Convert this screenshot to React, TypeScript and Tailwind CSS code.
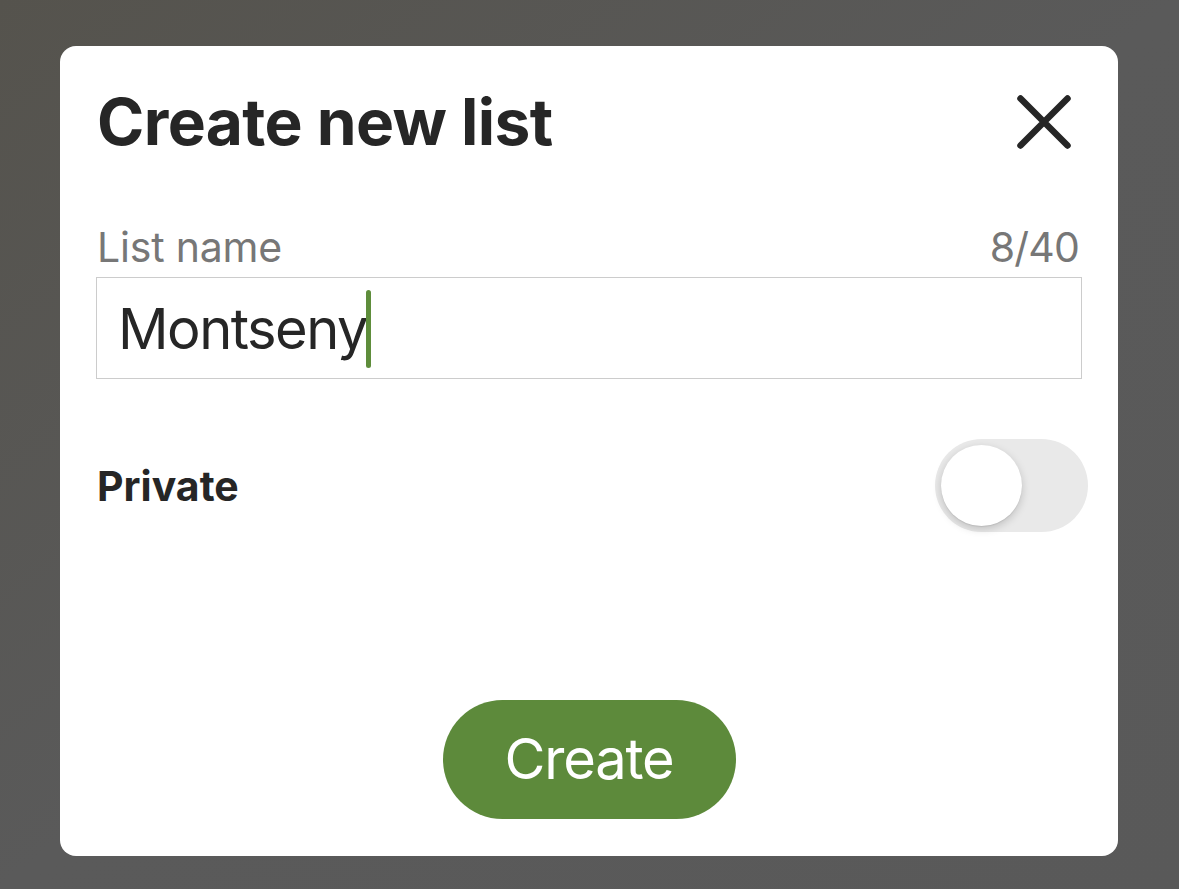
export default function App() {
  return (
    <div
      className="h-[889px] w-full bg-gradient-to-br from-[#55534d] via-[#5a5a5a] to-[#595959] pt-[46px] pl-[60px]"
      style={{ fontFamily: "Inter, 'Noto Sans', sans-serif" }}
    >
      <div className="w-[1058px] h-[810px] bg-white rounded-[16px] flex flex-col pt-[37px] px-[37px] pb-[37px]">
        {/* header */}
        <div className="flex items-center justify-between">
          <h1 className="text-[64px] leading-[77px] font-bold text-[#262626] tracking-[-0.6px]">
            Create new list
          </h1>
          <button className="mr-[10px] text-[#262626]" aria-label="Close">
            <svg width="54" height="54" viewBox="0 0 54 54" fill="none">
              <path d="M3.5 3.5L50.5 50.5M50.5 3.5L3.5 50.5" stroke="currentColor" strokeWidth="6.5" strokeLinecap="round" />
            </svg>
          </button>
        </div>

        {/* list name */}
        <div className="mt-[62px] flex items-center justify-between text-[41px] leading-[50px] text-[#777777]">
          <span className="tracking-[-0.2px]">List name</span>
          <span className="mr-[2px] tracking-[-0.8px]">8/40</span>
        </div>
        <div className="mt-[5px] -ml-px mr-[-1px] h-[102px] border border-[#cccccc] flex items-center pl-[21px]">
          <span className="text-[56px] leading-[68px] text-[#262626] mt-[2px] tracking-[-1.5px]">Montseny</span>
          <span className="-ml-[1px] mt-[2px] w-[5px] h-[78px] rounded-full bg-[#5e8d3b]" />
        </div>

        {/* private */}
        <div className="mt-[60px] flex items-center justify-between">
          <span className="text-[41px] leading-[50px] font-bold text-[#262626]">Private</span>
          <div className="mr-[-7px] w-[153px] h-[93px] rounded-full bg-[#e9e9e9] p-[6px] flex items-center">
            <div className="w-[81px] h-[81px] rounded-full bg-white shadow-[0_3px_8px_rgba(0,0,0,0.18),0_1px_1px_rgba(0,0,0,0.08)]" />
          </div>
        </div>

        {/* create */}
        <div className="mt-auto flex justify-center">
          <button className="w-[293px] h-[119px] rounded-full bg-[#5d8a3b] text-white text-[56px] leading-[68px] tracking-[-1.2px] pb-[2px]">
            Create
          </button>
        </div>
      </div>
    </div>
  )
}
